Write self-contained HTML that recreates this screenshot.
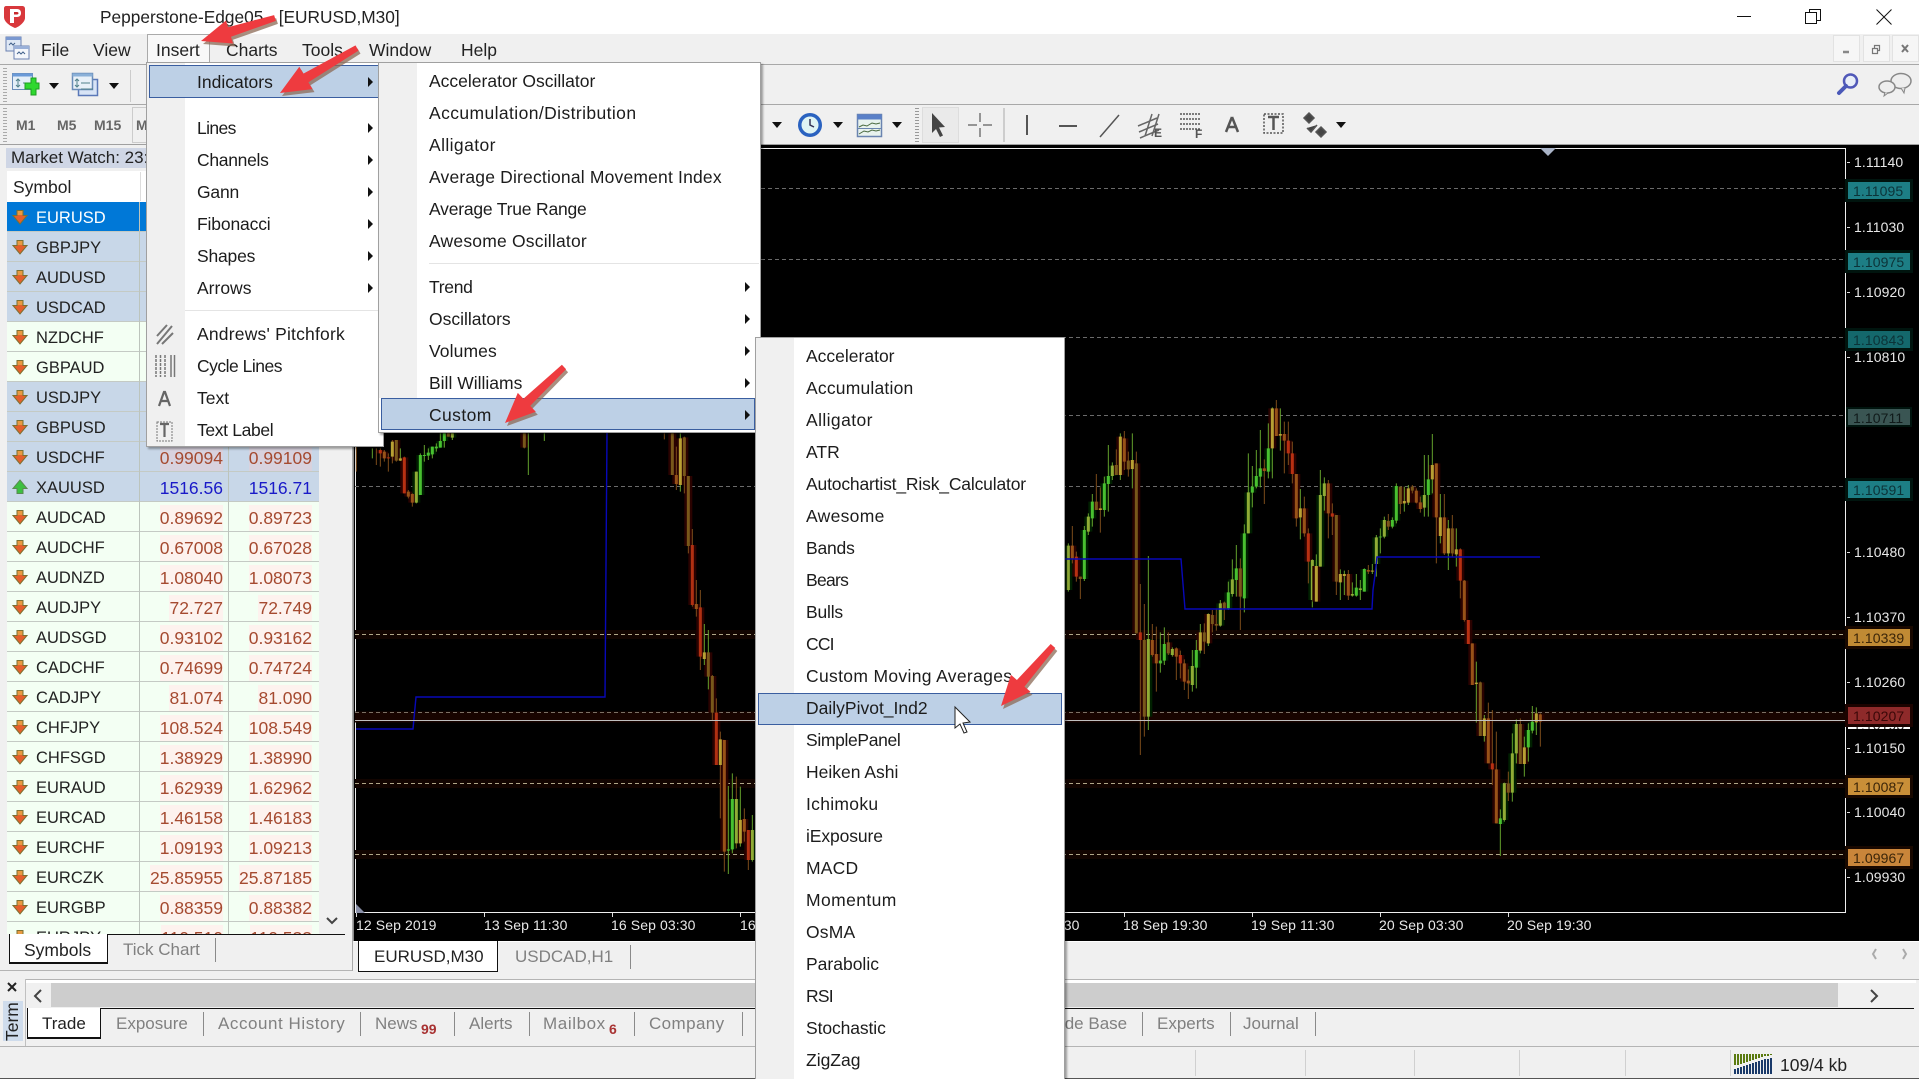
<!DOCTYPE html>
<html lang="en"><head><meta charset="utf-8"><title>Pepperstone-Edge05 - [EURUSD,M30]</title>
<style>
html,body{margin:0;padding:0;width:1919px;height:1079px;overflow:hidden;background:#f0f0f0;font-family:"Liberation Sans",sans-serif;color:#1a1a1a}
div,span,svg{position:absolute}
#root{left:0;top:0;width:1919px;height:1079px;overflow:hidden;background:#f0f0f0}
.t{white-space:nowrap}
.m{font-size:17.5px;top:38px;line-height:24px;white-space:nowrap;color:#222}
.tb{font-size:14px;font-weight:bold;color:#666;top:117px;line-height:16px}
.r{left:7px;width:312px;height:30px;box-sizing:border-box;border-bottom:1px solid #c4cac4;line-height:33px;font-size:16.5px;background:#f3fff3;color:#222}
.r.b{background:#c8d7e8}
.r::before,.r::after{content:"";position:absolute;top:0;width:1px;height:30px;background:#bcc4bc}
.r::before{left:132px}.r::after{left:221px}
.r svg{left:5px;top:7px;width:16px;height:16px}
.s{left:29px}
.a,.c{font-size:17.5px;color:#a54a30;top:3px;line-height:26px}
.a{right:96px;background:#fdf2ee}.c{right:7px;background:#fdf2ee}
.b .a,.b .c{background:#d8d2de}
.u .a,.u .c{color:#1a1ac8;background:none}
.ax{font-size:14px;color:#e8e8e8;left:1854px;line-height:16px;letter-spacing:.1px;white-space:nowrap}
.box{left:1848px;width:62px;height:17px;font-size:14px;line-height:18px;color:#0c3338;text-indent:5px;letter-spacing:.1px;overflow:hidden}
.tk{left:1847px;width:3px;height:1px;background:#ddd}
.tm{font-size:14px;color:#e8e8e8;top:917px;line-height:16px;white-space:nowrap;letter-spacing:.1px}
.tt{top:913px;width:1px;height:4px;background:#ddd}
.menu{background:#fff;border:1px solid #a0a0a0;box-shadow:2px 2px 2px rgba(0,0,0,.35);box-sizing:border-box}
.gut{background:#f0f0f0}
.mi{font-size:17.5px;line-height:32px;height:32px;white-space:nowrap;color:#1c1c1c}
.hl{background:#bdd0e6;border:1px solid #3a5ea0;box-sizing:border-box}
.ar{width:0;height:0;border-left:5px solid #111;border-top:5px solid transparent;border-bottom:5px solid transparent}
.dd{width:0;height:0;border:5px solid transparent;border-top:6px solid #111;border-bottom:0}
.sep{background:#e4e4e4;height:1px}
.tab{font-size:17px;color:#808080;top:1012px;line-height:24px;white-space:nowrap}
.vs{width:1px;background:#8a8a8a}
.st{top:1050px;height:26px;width:1px;background:#d0d0d0}
</style></head>
<body>
<div id="root">

<!-- title bar -->
<div style="left:0;top:0;width:1919px;height:34px;background:#fff"></div>
<svg style="left:2px;top:3px" width="26" height="26" viewBox="0 0 26 26"><path d="M4 3h16c2 0 3 1 3 3v9c0 4-6 9-10 10C8 23 2 19 2 14V5c0-1 1-2 2-2z" fill="#d8383c"/><path d="M8 6h7c3 0 4 2 4 4s-1 4-4 4h-3v6H8z" fill="#fff"/><path d="M12 9h3c1 0 1.500.5 1.500 1.300S16 11.500 15 11.500h-3z" fill="#c8282c"/></svg>
<div class="t" style="left:100px;top:5px;font-size:17.3px;line-height:24px;color:#222">Pepperstone-Edge05 - [EURUSD,M30]</div>
<svg style="left:1737px;top:9px" width="182" height="16" viewBox="0 0 182 16"><path d="M0 7.500h14" stroke="#111" stroke-width="1" fill="none"/><path d="M68.500 3.500h11v11h-11zM72.500 3.500V.5h11v11h-4" stroke="#111" fill="none"/><path d="M139.500.5l15 15M154.500.5l-15 15" stroke="#111" fill="none"/></svg>

<!-- menu bar -->
<div style="left:0;top:64px;width:1919px;height:1px;background:#a8a8a8"></div>
<svg style="left:5px;top:35px" width="26" height="26" viewBox="0 0 26 26"><rect x="1" y="2" width="15" height="14" fill="#dfe8f5" stroke="#6a80b0"/><rect x="1" y="2" width="15" height="3" fill="#7a98d0"/><rect x="9" y="11" width="15" height="13" fill="#f4f6fb" stroke="#6a80b0"/><rect x="9" y="11" width="15" height="3" fill="#9ab0d8"/><path d="M4 10l2-2 2 2 2-2M12 19l2-2 2 2 2-2 2 2" stroke="#40608a" fill="none"/></svg>
<div class="m" style="left:41px">File</div>
<div class="m" style="left:93px">View</div>
<div style="left:147px;top:34px;width:63px;height:30px;background:#f8f8f8;border:1px solid #aaa;border-bottom:0;box-sizing:border-box"></div>
<div class="m" style="left:156px">Insert</div>
<div class="m" style="left:226px">Charts</div>
<div class="m" style="left:302px">Tools</div>
<div class="m" style="left:369px">Window</div>
<div class="m" style="left:461px">Help</div>
<div style="left:1833px;top:35px;width:27px;height:27px;background:#f6f6f6;border:1px solid #e2e2e2;box-sizing:border-box"></div>
<div style="left:1863px;top:35px;width:27px;height:27px;background:#f6f6f6;border:1px solid #e2e2e2;box-sizing:border-box"></div>
<div style="left:1892px;top:35px;width:27px;height:27px;background:#f6f6f6;border:1px solid #e2e2e2;box-sizing:border-box"></div>
<svg style="left:1833px;top:35px" width="86" height="27" viewBox="0 0 86 27"><path d="M10 17h6" stroke="#888" stroke-width="2.500"/><path d="M39.500 13.500h5v5h-5zM41.500 13V10.500h5v5h-2" stroke="#777" fill="none" stroke-width="1.200"/><path d="M69 10l6 7M75 10l-6 7" stroke="#777" stroke-width="2"/></svg>

<!-- toolbar 1 -->
<div style="left:0;top:104px;width:1919px;height:1px;background:#a8a8a8"></div>
<div style="left:3px;top:68px;width:4px;height:34px;background:repeating-linear-gradient(#aaa 0 1px,#f0f0f0 1px 3px)"></div>
<svg style="left:11px;top:71px" width="30" height="26" viewBox="0 0 30 26"><rect x="1.500" y="2.500" width="20" height="16" fill="#e4eef8" stroke="#6a8cb8"/><rect x="1.500" y="2.500" width="20" height="3" fill="#6a9ad8"/><path d="M7 8v8M5 10l2-2 2 2M5 14l2 2 2-2M12 12h6" stroke="#50808a" fill="none"/><path d="M15 11h6V6h5v5h3v6h-3v6h-5v-6h-6z" transform="translate(-1,1)" fill="#2fd82f" stroke="#1e9e20"/></svg>
<div class="dd" style="left:49px;top:83px"></div>
<svg style="left:71px;top:71px" width="30" height="28" viewBox="0 0 30 28"><rect x="7.500" y="8.500" width="19" height="16" fill="#d8e4f6" stroke="#5a78b8" stroke-width="1.500"/><rect x="1.500" y="2.500" width="20" height="16" fill="#e8f0f8" stroke="#6a8cb8" stroke-width="1.500"/><rect x="1.500" y="2.500" width="20" height="3" fill="#8ab0d8"/><path d="M6 8v8M4 10l2-2 2 2M4 14l2 2 2-2M10 12h9M10 18h12" stroke="#50808a" fill="none"/></svg>
<div class="dd" style="left:109px;top:83px"></div>
<div class="vs" style="left:130px;top:70px;height:32px;background:#ccc"></div>

<!-- toolbar 2 -->
<div style="left:0;top:144px;width:1919px;height:1px;background:#a0a0a0"></div>
<div style="left:3px;top:108px;width:4px;height:34px;background:repeating-linear-gradient(#aaa 0 1px,#f0f0f0 1px 3px)"></div>
<div class="tb" style="left:16px">M1</div>
<div class="tb" style="left:57px">M5</div>
<div class="tb" style="left:94px">M15</div>
<div style="left:132px;top:107px;width:30px;height:36px;border:1px solid #ccc;box-sizing:border-box"></div>
<div class="tb" style="left:136px">M30</div>
<div class="dd" style="left:772px;top:122px"></div>
<svg style="left:797px;top:112px" width="26" height="26" viewBox="0 0 26 26"><circle cx="13" cy="13" r="12" fill="#2a62c0"/><circle cx="13" cy="13" r="8.500" fill="#dff4f4"/><path d="M13 7v6l4 2" stroke="#335" stroke-width="1.500" fill="none"/></svg>
<div class="dd" style="left:833px;top:122px"></div>
<svg style="left:856px;top:113px" width="28" height="26" viewBox="0 0 28 26"><rect x="1.500" y="1.500" width="24" height="22" fill="#e8f2ee" stroke="#6a84b0" stroke-width="1.500"/><rect x="1.500" y="1.500" width="24" height="5" fill="#5a80c8"/><path d="M3 14l4-2 4 1 5-3 4 1 4-1M3 21l5-3 4 1 4-2 4 1 4-1" stroke="#4a6a40" fill="none"/><path d="M2 15.500h23" stroke="#6a84b0"/></svg>
<div class="dd" style="left:892px;top:122px"></div>
<div style="left:915px;top:108px;width:4px;height:34px;background:repeating-linear-gradient(#999 0 1px,#f0f0f0 1px 3px)"></div>
<div style="left:922px;top:107px;width:37px;height:36px;border:1px solid #ddd;box-sizing:border-box;background:#eaeaea"></div>
<svg style="left:925px;top:108px" width="430" height="34" viewBox="0 0 430 34" fill="none" stroke="#555">
<path d="M7 5l13 14-6 .5 4 8-3 1.500-4-8-4 4z" fill="#444" stroke="none"/>
<path d="M55 5v9M55 20v9M43 17h9M58 17h9" stroke="#777" stroke-width="1.500"/>
<path d="M79 0v34" stroke="#aaa"/>
<path d="M102 7v20" stroke-width="2"/>
<path d="M134 18h18" stroke-width="2"/>
<path d="M175 29l19-22" stroke-width="1.500"/>
<path d="M213 18l19-8M214 24l19-8M215 30l19-8M220 28l7-22M227 28l7-22" stroke-width="1.500" stroke="#666"/>
<path d="M255 6h20M255 11h20M255 16h20M255 21h20" stroke-dasharray="2 1" stroke-width="1.500"/>
<path d="M307 9l-6 15M307 9l6 15M303 19h9" stroke-width="2.500"/>
<path d="M339 6h19v19h-19z" stroke-dasharray="2 1.500" stroke-width="1.500"/>
<path d="M343 9h11M348.500 9v13" stroke-width="2.500"/>
<path d="M384 5l5 5-5 5-5-5zM396 19l5 5-5 5-5-5zM382 20l4 4 6-7" fill="#444" stroke-width="1.500"/>
</svg>
<div class="t" style="left:1154px;top:127px;font-size:12px;color:#555;font-weight:bold;line-height:12px">E</div>
<div class="t" style="left:1195px;top:128px;font-size:12px;color:#555;font-weight:bold;line-height:12px">F</div>
<div class="dd" style="left:1336px;top:122px"></div>
<svg style="left:1836px;top:72px" width="24" height="26" viewBox="0 0 24 26"><circle cx="14.500" cy="9" r="6.500" fill="#e8eef8" stroke="#5058b8" stroke-width="2.500"/><path d="M10 14l-7 7" stroke="#4a58b8" stroke-width="4" stroke-linecap="round"/></svg>
<svg style="left:1877px;top:72px" width="36" height="26" viewBox="0 0 36 26"><ellipse cx="24" cy="9" rx="10" ry="7.500" fill="#eee" stroke="#888" stroke-width="1.500"/><path d="M24 16l3 5 1-5" fill="#ddd" stroke="#888"/><ellipse cx="10" cy="15" rx="8" ry="6" fill="#eee" stroke="#888" stroke-width="1.500"/><path d="M8 20l-1 4 4-3" fill="#ddd" stroke="#888"/></svg>

<!-- chart -->
<div style="left:353px;top:145px;width:1566px;height:796px;background:#000;border-left:1px solid #8a8a8a"></div>
<div style="left:355px;top:148px;width:1491px;height:765px;border:1px solid #eee;box-sizing:border-box"></div>
<svg style="left:0;top:0" width="1919" height="1079" viewBox="0 0 1919 1079">
<defs>
<path id="a1" d="M61 390V537M85 305V355M121 250V330M133 228V252M289 782V790M301 732V782M397 750V803M493 577V625M517 505V540M541 400V595M565 260V278M577 228V260M589 205V230M613 145V215"/>
<path id="a2" d="M13 437V570M73 350V395M145 197V228M253 717V950M385 798V855M469 610V677M505 538V582M553 277V400M745 480V600M325 747V765"/>
<path id="a3" d="M109 325V330M169 110V225M205 180V207M409 697V752M433 642V730M625 25V145M649 102V107M709 325V352"/>
<path id="a4" d="M49 530V537M97 305V330M157 195V225M193 182V208M217 190V700M241 720V950M313 727V760M421 697V725M445 645V672M457 672V677M481 608V628M529 505V590"/>
<path id="a5" d="M25 437V475M181 115V185M265 720V765M277 762V790M337 745V770M361 790V845M373 842V850M601 205V213M637 25V108M661 102V122M697 222V355M721 325V400"/>
<path id="a6" d="M37 470V530M229 697V720M349 765V790M673 122V160M685 160V222M733 400V485"/>
<path id="b1" d="M193 447V515M169 503V527M277 300V320M289 198V302M241 350V352M385 178V225M601 1195V1212M685 930V982M697 905V932"/>
<path id="b2" d="M61 225V440M73 190V228M229 352V432M253 300V350M157 522V527M181 505V510M373 225V263M613 1090V1200M637 1000V1118M649 912V1000"/>
<path id="b3" d="M49 438V545M121 462V487M133 462V468M217 452V455M313 243V250M325 205V248M397 135V178M421 292V348M445 325V400M469 388V403M529 788V792M553 895V948M673 982V1032M709 880V907"/>
<path id="b4" d="M109 285V485M265 303V320M301 200V252M337 200V212M457 325V400M541 787V948M625 1090V1118M661 912V1032"/>
<path id="b5" d="M85 190V280M145 462V527M205 450V455M349 212V248M361 247V267M409 130V292M433 292V400M493 482V600M517 670V795M565 895V1030M589 1048V1210M721 883V905"/>
<path id="b6" d="M97 280V290M481 388V482M505 600V672M577 1030V1048"/>
<path id="c1" d="M217 1107V1258M205 1258V1262"/>
<path id="c2" d="M277 1200V1290M229 1107V1240"/>
<path id="c3" d="M61 25V165M133 667V687M181 928V1005M241 1170V1240"/>
<path id="c4" d="M37 10V135M73 22V138M85 138V348M157 738V848M145 667V740"/>
<path id="c5" d="M49 135V162M109 522V537M193 930V1265M253 1167V1205"/>
<path id="c6" d="M97 345V525M121 532V680M169 848V1005M265 1200V1290"/>
<path id="d1" d="M211 90V210M223 90V93M235 83V92M247 65V88M259 65V70M271 48V68M283 25V48"/>
<path id="d2" d="M199 140V233M307 25V38"/>
<path id="d3" d="M127 50V95M151 100V107"/>
<path id="d4" d="M139 45V107M295 25V35M523 25V68"/>
<path id="d5" d="M103 80V100M175 200V215M187 207V233"/>
<path id="d6" d="M91 75V85M115 97V100M163 97V205"/>
</defs>
<g fill="none">
<path d="M355 634.500H1846M355 783.500H1846M355 854.500H1846" stroke-width="9" stroke="#120400"/>
<path d="M355 717H1846" stroke-width="11" stroke="#180400"/>
</g>
<g fill="none" stroke-dasharray="4 3">
<path d="M355 188.500H1846M355 259.500H1846M355 337.500H1846M355 415.500H1846M355 486.500H1846" stroke="#6a6a6a"/>
<path d="M355 634.500H1846M355 783.500H1846M355 854.500H1846" stroke="#b0a688"/>
<path d="M355 712.500H1846" stroke="#7c7064"/>
</g>
<g fill="none" transform="translate(1064,400) scale(.33333)">
<g stroke-width="24" stroke="#002000"><use href="#a1"/><use href="#a2"/></g>
<g stroke-width="24" stroke="#2a0200"><use href="#a3"/><use href="#a4"/><use href="#a5"/><use href="#a6"/></g>
<path stroke="#62a02c" stroke-width="3" d="M13 430V575M61 378V543M73 340V405M85 282V380M121 230V350M133 135V335M145 187V240M169 100V240M205 100V265M253 468V990M289 697V818M301 682V795M325 742V770M385 750V875M397 720V865M409 672V760M433 640V738M469 600V680M493 545V630M505 478V590M517 435V590M541 373V637M553 160V400M565 198V322M577 150V265M589 90V262M613 70V235M625 22V235M649 25V152M709 267V418M745 478V622"/>
<path stroke="#7c4c1a" stroke-width="3" d="M25 378V490M37 455V545M49 530V597M97 222V330M109 262V398M157 148V225M181 93V210M193 155V230M217 155V700M229 552V1065M241 612V1010M265 672V770M277 680V875M313 697V765M337 742V840M349 752V835M361 778V870M373 808V897M421 670V762M445 630V697M457 625V692M481 605V660M529 475V690M601 178V312M637 0V108M661 65V220M673 65V195M685 125V250M697 222V380M721 290V410M733 385V550"/>
<g stroke-width="9"><use href="#a1" stroke="#48c030"/><use href="#a2" stroke="#90ac36"/><use href="#a3" stroke="#b8a034"/><use href="#a4" stroke="#78581a"/><use href="#a5" stroke="#985218"/><use href="#a6" stroke="#b83012"/></g>
</g>
<g fill="none" transform="translate(1300,420) scale(.33333)">
<g stroke-width="24" stroke="#002000"><use href="#b1"/><use href="#b2"/></g>
<g stroke-width="24" stroke="#2a0200"><use href="#b3"/><use href="#b4"/><use href="#b5"/><use href="#b6"/></g>
<path stroke="#62a02c" stroke-width="3" d="M49 403V545M61 150V440M73 172V272M121 448V540M133 452V525M157 487V530M169 462V530M181 480V540M193 445V515M217 432V462M229 345V470M241 325V400M253 290V355M277 292V325M289 190V310M313 200V275M325 195V255M373 105V290M385 105V290M397 42V220M421 222V370M445 300V450M469 325V440M529 725V908M553 885V965M601 1168V1308M613 1088V1205M637 940V1145M649 898V1030M673 950V1070M685 910V1025M697 858V940M709 862V945"/>
<path stroke="#7c4c1a" stroke-width="3" d="M85 180V355M97 250V345M109 285V525M145 450V540M205 435V462M265 282V330M301 200V282M337 195V220M349 205V250M361 230V278M409 130V430M433 222V405M457 285V410M481 385V535M493 480V605M505 600V672M517 670V795M541 785V948M565 848V1020M577 870V1095M589 935V1210M625 1055V1143M661 895V1032M721 880V980"/>
<g stroke-width="9"><use href="#b1" stroke="#48c030"/><use href="#b2" stroke="#90ac36"/><use href="#b3" stroke="#b8a034"/><use href="#b4" stroke="#78581a"/><use href="#b5" stroke="#985218"/><use href="#b6" stroke="#b83012"/></g>
</g>
<g fill="none" transform="translate(660,430) scale(.33333)">
<g stroke-width="24" stroke="#002000"><use href="#c1"/><use href="#c2"/></g>
<g stroke-width="24" stroke="#2a0200"><use href="#c3"/><use href="#c4"/><use href="#c5"/><use href="#c6"/></g>
<path stroke="#62a02c" stroke-width="3" d="M61 10V185M133 582V705M205 1068V1332M217 1030V1270M241 1070V1250M277 1155V1295M145 600V778"/>
<path stroke="#7c4c1a" stroke-width="3" d="M13 10V28M37 10V135M49 50V180M73 20V190M85 138V370M97 297V530M109 450V560M121 480V720M157 735V870M169 805V1005M181 905V1165M193 930V1325M229 1040V1255M253 1135V1235M265 1200V1320"/>
<g stroke-width="9"><use href="#c1" stroke="#48c030"/><use href="#c2" stroke="#90ac36"/><use href="#c3" stroke="#b8a034"/><use href="#c4" stroke="#78581a"/><use href="#c5" stroke="#985218"/><use href="#c6" stroke="#b03012"/></g>
</g>
<g fill="none" transform="translate(350,425) scale(.33333)">
<g stroke-width="24" stroke="#002000"><use href="#d1"/><use href="#d2"/></g>
<g stroke-width="24" stroke="#2a0200"><use href="#d4"/><use href="#d5"/><use href="#d6"/></g>
<path stroke="#62a02c" stroke-width="3" d="M67 70V100M199 140V235M211 85V205M223 60V110M235 70V105M247 65V100M259 55V80M271 25V68M283 25V68M307 25V45M535 25V150M583 25V48M151 70V108"/>
<path stroke="#7c4c1a" stroke-width="3" d="M19 65V140M79 70V120M91 70V125M103 75V110M115 85V140M127 45V115M139 45V110M163 95V205M175 195V220M187 205V245M295 25V35M523 25V70"/>
<g stroke-width="9"><use href="#d1" stroke="#48c030"/><use href="#d2" stroke="#90ac36"/><use href="#d3" stroke="#b8a034"/><use href="#d4" stroke="#78581a"/><use href="#d5" stroke="#985218"/><use href="#d6" stroke="#b83012"/></g>
</g>
<path fill="none" stroke="#0808b8" stroke-width="1.400" d="M356 729H413L416 697H605L606 564L607 433"/>
<path fill="none" stroke="#0808b8" stroke-width="1.400" d="M1064 559H1181L1185 609H1372L1373 590L1375 575L1377 557H1540"/>
<path d="M355 720.500H1846" stroke="#c0c0c0" stroke-width="1"/>
<path d="M1540 148h16l-8 8z" fill="#aab4c8"/>
<path d="M356 913v-9l9 9z" fill="#8a90a8"/>
</svg>

<!-- axis -->
<div class="ax" style="top:154px">1.11140</div><div class="tk" style="top:162px"></div>
<div class="box" style="top:182px;background:#1d7e85;box-shadow:0 0 0 3px #00140e">1.11095</div>
<div class="ax" style="top:219px">1.11030</div><div class="tk" style="top:227px"></div>
<div class="box" style="top:253px;background:#1d7e85;box-shadow:0 0 0 3px #00140e">1.10975</div>
<div class="ax" style="top:284px">1.10920</div><div class="tk" style="top:292px"></div>
<div class="ax" style="top:349px">1.10810</div><div class="tk" style="top:357px"></div>
<div class="box" style="top:331px;background:#14686c;box-shadow:0 0 0 3px #00140e">1.10843</div>
<div class="ax" style="top:414px">1.10700</div>
<div class="box" style="top:409px;background:#3a5553;box-shadow:0 0 0 2px #00140e;height:16px;color:#101a1a">1.10711</div>
<div class="box" style="top:481px;background:#1d7e85;box-shadow:0 0 0 3px #00140e">1.10591</div>
<div class="ax" style="top:544px">1.10480</div><div class="tk" style="top:552px"></div>
<div class="ax" style="top:609px">1.10370</div><div class="tk" style="top:617px"></div>
<div class="box" style="top:629px;background:#c08a34;box-shadow:0 0 0 3px #180800;color:#3a2408">1.10339</div>
<div class="ax" style="top:674px">1.10260</div><div class="tk" style="top:682px"></div>
<div class="box" style="top:716px;height:13px;background:#fff;color:#222">1.10193</div>
<div class="box" style="top:707px;background:#8e2a2a;box-shadow:0 0 0 3px #1c0300;color:#3a0808">1.10207</div>
<div class="ax" style="top:740px">1.10150</div><div class="tk" style="top:748px"></div>
<div class="box" style="top:778px;background:#c98f38;box-shadow:0 0 0 3px #180800;color:#3a2408">1.10087</div>
<div class="ax" style="top:804px">1.10040</div><div class="tk" style="top:812px"></div>
<div class="box" style="top:849px;background:#c9853a;box-shadow:0 0 0 3px #180800;color:#3a2408">1.09967</div>
<div class="ax" style="top:869px">1.09930</div><div class="tk" style="top:877px"></div>

<!-- time axis -->
<div class="tt" style="left:356px"></div><div class="tt" style="left:484px"></div><div class="tt" style="left:612px"></div><div class="tt" style="left:740px"></div><div class="tt" style="left:1124px"></div><div class="tt" style="left:1252px"></div><div class="tt" style="left:1380px"></div><div class="tt" style="left:1508px"></div>
<div class="tm" style="left:356px">12 Sep 2019</div>
<div class="tm" style="left:484px">13 Sep 11:30</div>
<div class="tm" style="left:611px">16 Sep 03:30</div>
<div class="tm" style="left:740px">16 Sep 19:30</div>
<div class="tm" style="left:995px">18 Sep 03:30</div>
<div class="tm" style="left:1123px">18 Sep 19:30</div>
<div class="tm" style="left:1251px">19 Sep 11:30</div>
<div class="tm" style="left:1379px">20 Sep 03:30</div>
<div class="tm" style="left:1507px">20 Sep 19:30</div>

<!-- chart tabs -->
<div style="left:354px;top:941px;width:1565px;height:1px;background:#fff"></div>
<div style="left:358px;top:941px;width:140px;height:31px;background:#fff;border:1px solid #111;border-top:0;box-sizing:border-box"></div>
<div class="t" style="left:374px;top:945px;font-size:17px;line-height:24px;color:#222">EURUSD,M30</div>
<div class="t" style="left:515px;top:945px;font-size:17px;line-height:24px;color:#808080">USDCAD,H1</div>
<div class="vs" style="left:630px;top:945px;height:24px"></div>
<svg style="left:1870px;top:947px" width="40" height="14" viewBox="0 0 40 14"><path d="M6 2L3 7l3 5M33 2l3 5-3 5" stroke="#aaa" stroke-width="2" fill="none"/></svg>

<!-- market watch -->
<div style="left:6px;top:148px;width:142px;height:20px;background:#cfd6e5"></div>
<div class="t" style="left:11px;top:146px;font-size:17px;line-height:24px;color:#222">Market Watch: 23:</div>
<div style="left:7px;top:171px;width:312px;height:31px;background:#fff"></div>
<div class="t" style="left:13px;top:175px;font-size:17.5px;line-height:24px;color:#222">Symbol</div>
<div style="left:140px;top:172px;width:1px;height:29px;background:#ddd"></div>
<svg width="0" height="0" style="left:0;top:0"><defs>
<symbol id="dn" viewBox="0 0 16 16"><path d="M5 1.500h6v5h4L8 15 1 6.500h4z" fill="#e4602c" stroke="#7c7030" stroke-width="1"/><path d="M5.500 2h5v4h-5z" fill="#e89a40"/></symbol>
<symbol id="up" viewBox="0 0 16 16"><path d="M5 14.500h6v-5h4L8 1 1 9.500h4z" fill="#3cc040" stroke="#5a8a50" stroke-width="1"/></symbol>
</defs></svg>
<div style="left:0;top:0;width:352px;height:934px;overflow:hidden">
<div class="r" style="top:202px;background:#0078d7;color:#fff;width:139px"><svg><use href="#dn"/></svg><span class="s">EURUSD</span></div>
<div class="r b" style="top:232px"><svg><use href="#dn"/></svg><span class="s">GBPJPY</span></div>
<div class="r b" style="top:262px"><svg><use href="#dn"/></svg><span class="s">AUDUSD</span></div>
<div class="r b" style="top:292px"><svg><use href="#dn"/></svg><span class="s">USDCAD</span></div>
<div class="r" style="top:322px"><svg><use href="#dn"/></svg><span class="s">NZDCHF</span></div>
<div class="r" style="top:352px"><svg><use href="#dn"/></svg><span class="s">GBPAUD</span></div>
<div class="r b" style="top:382px"><svg><use href="#dn"/></svg><span class="s">USDJPY</span></div>
<div class="r b" style="top:412px"><svg><use href="#dn"/></svg><span class="s">GBPUSD</span></div>
<div class="r b" style="top:442px"><svg><use href="#dn"/></svg><span class="s">USDCHF</span><span class="a">0.99094</span><span class="c">0.99109</span></div>
<div class="r b u" style="top:472px"><svg><use href="#up"/></svg><span class="s">XAUUSD</span><span class="a">1516.56</span><span class="c">1516.71</span></div>
<div class="r" style="top:502px"><svg><use href="#dn"/></svg><span class="s">AUDCAD</span><span class="a">0.89692</span><span class="c">0.89723</span></div>
<div class="r" style="top:532px"><svg><use href="#dn"/></svg><span class="s">AUDCHF</span><span class="a">0.67008</span><span class="c">0.67028</span></div>
<div class="r" style="top:562px"><svg><use href="#dn"/></svg><span class="s">AUDNZD</span><span class="a">1.08040</span><span class="c">1.08073</span></div>
<div class="r" style="top:592px"><svg><use href="#dn"/></svg><span class="s">AUDJPY</span><span class="a">72.727</span><span class="c">72.749</span></div>
<div class="r" style="top:622px"><svg><use href="#dn"/></svg><span class="s">AUDSGD</span><span class="a">0.93102</span><span class="c">0.93162</span></div>
<div class="r" style="top:652px"><svg><use href="#dn"/></svg><span class="s">CADCHF</span><span class="a">0.74699</span><span class="c">0.74724</span></div>
<div class="r" style="top:682px"><svg><use href="#dn"/></svg><span class="s">CADJPY</span><span class="a">81.074</span><span class="c">81.090</span></div>
<div class="r" style="top:712px"><svg><use href="#dn"/></svg><span class="s">CHFJPY</span><span class="a">108.524</span><span class="c">108.549</span></div>
<div class="r" style="top:742px"><svg><use href="#dn"/></svg><span class="s">CHFSGD</span><span class="a">1.38929</span><span class="c">1.38990</span></div>
<div class="r" style="top:772px"><svg><use href="#dn"/></svg><span class="s">EURAUD</span><span class="a">1.62939</span><span class="c">1.62962</span></div>
<div class="r" style="top:802px"><svg><use href="#dn"/></svg><span class="s">EURCAD</span><span class="a">1.46158</span><span class="c">1.46183</span></div>
<div class="r" style="top:832px"><svg><use href="#dn"/></svg><span class="s">EURCHF</span><span class="a">1.09193</span><span class="c">1.09213</span></div>
<div class="r" style="top:862px"><svg><use href="#dn"/></svg><span class="s">EURCZK</span><span class="a">25.85955</span><span class="c">25.87185</span></div>
<div class="r" style="top:892px"><svg><use href="#dn"/></svg><span class="s">EURGBP</span><span class="a">0.88359</span><span class="c">0.88382</span></div>
<div class="r" style="top:922px"><svg><use href="#dn"/></svg><span class="s">EURJPY</span><span class="a">110.510</span><span class="c">110.533</span></div>
</div>
<svg style="left:325px;top:915px" width="14" height="12" viewBox="0 0 14 12"><path d="M2 3l5 5 5-5" stroke="#444" stroke-width="2" fill="none"/></svg>
<div style="left:9px;top:934px;width:336px;height:1px;background:#111"></div>
<div style="left:9px;top:934px;width:99px;height:30px;background:#fff;border:1px solid #111;border-top:0;border-bottom-width:2px;box-sizing:border-box"></div>
<div class="t" style="left:24px;top:938px;font-size:17.5px;line-height:24px;color:#222">Symbols</div>
<div class="t" style="left:123px;top:938px;font-size:17px;line-height:24px;color:#808080">Tick Chart</div>
<div class="vs" style="left:215px;top:938px;height:24px"></div>
<div style="left:0;top:970px;width:353px;height:1px;background:#b4b4b4"></div>
<div style="left:352px;top:145px;width:1px;height:826px;background:#a8a8a8"></div>

<!-- terminal -->
<div style="left:25px;top:979px;width:1894px;height:1px;background:#b4b4b4"></div>
<div style="left:25px;top:979px;width:1px;height:67px;background:#c0c0c0"></div>
<div style="left:26px;top:980px;width:1890px;height:3px;background:#fff"></div>
<svg style="left:6px;top:981px" width="12" height="12" viewBox="0 0 12 12"><path d="M2 2l8 8M10 2l-8 8" stroke="#222" stroke-width="2"/></svg>
<div style="left:3px;top:1001px;width:20px;height:40px;background:#cfdcec;overflow:hidden"><div class="t" style="left:-11px;top:8px;width:40px;height:24px;font-size:17.5px;line-height:24px;transform:rotate(-90deg);color:#222;text-align:left">Term</div></div>
<div style="left:51px;top:983px;width:1787px;height:24px;background:#cdcdcd"></div>
<svg style="left:32px;top:988px" width="12" height="16" viewBox="0 0 12 16"><path d="M9 2L3 8l6 6" stroke="#444" stroke-width="2" fill="none"/></svg>
<svg style="left:1868px;top:988px" width="12" height="16" viewBox="0 0 12 16"><path d="M3 2l6 6-6 6" stroke="#444" stroke-width="2" fill="none"/></svg>
<div style="left:27px;top:1008px;width:1887px;height:1px;background:#111"></div>
<div style="left:27px;top:1008px;width:74px;height:31px;background:#fff;border:1px solid #111;border-top:0;border-bottom-width:2px;box-sizing:border-box"></div>
<div class="tab" style="left:42px;color:#222">Trade</div>
<div class="tab" style="left:116px">Exposure</div><div class="vs" style="left:203px;top:1012px;height:24px"></div>
<div class="tab" style="left:218px;letter-spacing:.55px">Account History</div><div class="vs" style="left:360px;top:1012px;height:24px"></div>
<div class="tab" style="left:375px">News</div><div class="t" style="left:421px;top:1021px;font-size:14px;line-height:16px;font-weight:bold;color:#a83232">99</div><div class="vs" style="left:454px;top:1012px;height:24px"></div>
<div class="tab" style="left:469px">Alerts</div><div class="vs" style="left:529px;top:1012px;height:24px"></div>
<div class="tab" style="left:543px;letter-spacing:.6px">Mailbox</div><div class="t" style="left:609px;top:1021px;font-size:14px;line-height:16px;font-weight:bold;color:#a83232">6</div><div class="vs" style="left:634px;top:1012px;height:24px"></div>
<div class="tab" style="left:649px;letter-spacing:.4px">Company</div><div class="vs" style="left:742px;top:1012px;height:24px"></div>
<div class="tab" style="left:1043px">Code Base</div><div class="vs" style="left:1142px;top:1012px;height:24px"></div>
<div class="tab" style="left:1157px">Experts</div><div class="vs" style="left:1230px;top:1012px;height:24px"></div>
<div class="tab" style="left:1243px">Journal</div><div class="vs" style="left:1315px;top:1012px;height:24px"></div>

<!-- status -->
<div style="left:0;top:1046px;width:1919px;height:1px;background:#b4b4b4"></div>
<div style="left:0;top:1078px;width:1919px;height:1px;background:#555"></div>
<div class="st" style="left:1195px"></div><div class="st" style="left:1305px"></div><div class="st" style="left:1414px"></div><div class="st" style="left:1519px"></div><div class="st" style="left:1625px"></div><div class="st" style="left:1730px"></div>
<svg style="left:1734px;top:1054px" width="38" height="20" viewBox="0 0 38 20"><path d="M1 0V11M4 0V11M7 0V10M10 0V9M13 0V8M16 0V7M19 0V6M22 0V5M25 0V4M28 0V3M31 0V2M34 0V2M37 0V1" stroke="#5a7a10" stroke-width="2"/><path d="M1 15V20M4 14V20M7 13V20M10 12V20M13 11V20M16 10V20M19 9V20M22 8V20M25 7V20M28 6V20M31 5V20M34 5V20M37 4V20" stroke="#1a3a6a" stroke-width="2"/></svg>
<div class="t" style="left:1780px;top:1053px;font-size:17.5px;line-height:24px;color:#222">109/4 kb</div>

<!-- insert menu -->
<div class="menu" style="left:146px;top:62px;width:238px;height:385px"></div>
<div class="gut" style="left:147px;top:63px;width:38px;height:383px"></div>
<div class="hl" style="left:149px;top:65px;width:230px;height:33px"></div>
<div class="mi" style="left:197px;top:66px">Indicators</div><div class="ar" style="left:368px;top:77px"></div>
<div class="mi" style="left:197px;top:112px;letter-spacing:-.6px">Lines</div><div class="ar" style="left:368px;top:123px"></div>
<div class="mi" style="left:197px;top:144px;letter-spacing:-.3px">Channels</div><div class="ar" style="left:368px;top:155px"></div>
<div class="mi" style="left:197px;top:176px;letter-spacing:-.2px">Gann</div><div class="ar" style="left:368px;top:187px"></div>
<div class="mi" style="left:197px;top:208px;letter-spacing:-.15px">Fibonacci</div><div class="ar" style="left:368px;top:219px"></div>
<div class="mi" style="left:197px;top:240px;letter-spacing:-.2px">Shapes</div><div class="ar" style="left:368px;top:251px"></div>
<div class="mi" style="left:197px;top:272px">Arrows</div><div class="ar" style="left:368px;top:283px"></div>
<div class="sep" style="left:185px;top:310px;width:198px"></div>
<div class="mi" style="left:197px;top:318px;letter-spacing:.2px">Andrews' Pitchfork</div>
<div class="mi" style="left:197px;top:350px;letter-spacing:-.5px">Cycle Lines</div>
<div class="mi" style="left:197px;top:382px">Text</div>
<div class="mi" style="left:197px;top:414px;letter-spacing:-.35px">Text Label</div>
<svg style="left:153px;top:323px" width="24" height="120" viewBox="0 0 24 120" fill="none" stroke="#777">
<path d="M4 13L14 2M4 21L19 3M9 21L20 10" stroke-width="2"/>
<path d="M3 32v22M7.500 32v22M12 32v22" stroke-width="1.500" stroke-dasharray="3 1"/><path d="M18 32v22M21.500 32v22" stroke-width="1.500"/>
<path d="M6 83l5-14h1l5 14M8 78h7" stroke-width="2.200" stroke="#666"/>
<path d="M4 99h15v19H4z" stroke-dasharray="2 1"/>
<path d="M7 101h9M11.500 101v13" stroke-width="2.200" stroke="#666"/>
</svg>

<!-- indicators submenu -->
<div class="menu" style="left:378px;top:62px;width:383px;height:371px"></div>
<div class="gut" style="left:379px;top:63px;width:38px;height:335px"></div>
<div class="mi" style="left:429px;top:65px">Accelerator Oscillator</div>
<div class="mi" style="left:429px;top:97px;letter-spacing:.4px">Accumulation/Distribution</div>
<div class="mi" style="left:429px;top:129px;letter-spacing:.4px">Alligator</div>
<div class="mi" style="left:429px;top:161px;letter-spacing:.18px">Average Directional Movement Index</div>
<div class="mi" style="left:429px;top:193px;letter-spacing:-.2px">Average True Range</div>
<div class="mi" style="left:429px;top:225px;letter-spacing:.2px">Awesome Oscillator</div>
<div class="sep" style="left:429px;top:263px;width:330px"></div>
<div class="mi" style="left:429px;top:271px;letter-spacing:-.3px">Trend</div><div class="ar" style="left:745px;top:282px"></div>
<div class="mi" style="left:429px;top:303px">Oscillators</div><div class="ar" style="left:745px;top:314px"></div>
<div class="mi" style="left:429px;top:335px;letter-spacing:.1px">Volumes</div><div class="ar" style="left:745px;top:346px"></div>
<div class="mi" style="left:429px;top:367px">Bill Williams</div><div class="ar" style="left:745px;top:378px"></div>
<div class="hl" style="left:381px;top:398px;width:374px;height:32px"></div>
<div class="mi" style="left:429px;top:399px;letter-spacing:.4px">Custom</div><div class="ar" style="left:745px;top:410px"></div>

<!-- custom submenu -->
<div class="menu" style="left:755px;top:337px;width:310px;height:750px"></div>
<div class="gut" style="left:756px;top:338px;width:38px;height:741px"></div>
<div class="hl" style="left:758px;top:693px;width:304px;height:32px"></div>
<div class="mi" style="left:806px;top:340px">Accelerator</div>
<div class="mi" style="left:806px;top:372px;letter-spacing:.2px">Accumulation</div>
<div class="mi" style="left:806px;top:404px;letter-spacing:.4px">Alligator</div>
<div class="mi" style="left:806px;top:436px">ATR</div>
<div class="mi" style="left:806px;top:468px;letter-spacing:-.17px">Autochartist_Risk_Calculator</div>
<div class="mi" style="left:806px;top:500px;letter-spacing:.3px">Awesome</div>
<div class="mi" style="left:806px;top:532px;letter-spacing:-.2px">Bands</div>
<div class="mi" style="left:806px;top:564px;letter-spacing:-.7px">Bears</div>
<div class="mi" style="left:806px;top:596px;letter-spacing:-.2px">Bulls</div>
<div class="mi" style="left:806px;top:628px;letter-spacing:-.8px">CCI</div>
<div class="mi" style="left:806px;top:660px;letter-spacing:.33px">Custom Moving Averages</div>
<div class="mi" style="left:806px;top:692px">DailyPivot_Ind2</div>
<div class="mi" style="left:806px;top:724px;letter-spacing:-.35px">SimplePanel</div>
<div class="mi" style="left:806px;top:756px">Heiken Ashi</div>
<div class="mi" style="left:806px;top:788px;letter-spacing:.3px">Ichimoku</div>
<div class="mi" style="left:806px;top:820px;letter-spacing:-.1px">iExposure</div>
<div class="mi" style="left:806px;top:852px;letter-spacing:.2px">MACD</div>
<div class="mi" style="left:806px;top:884px;letter-spacing:.4px">Momentum</div>
<div class="mi" style="left:806px;top:916px;letter-spacing:.2px">OsMA</div>
<div class="mi" style="left:806px;top:948px">Parabolic</div>
<div class="mi" style="left:806px;top:980px;letter-spacing:-.8px">RSI</div>
<div class="mi" style="left:806px;top:1012px;letter-spacing:-.1px">Stochastic</div>
<div class="mi" style="left:806px;top:1044px">ZigZag</div>

<!-- cursor + red arrows -->
<svg style="left:0;top:0" width="1919" height="1079" viewBox="0 0 1919 1079">
<path d="M955 707v21l5-4 4 9 3-1-4-9 7-1z" fill="#fff" stroke="#222" stroke-width="1"/>
<g fill="#8c6a55" opacity=".75" transform="translate(2,3)">
<polygon points="201,41 233,43.500 231,36.800 275.900,20.900 274.100,15.100 228,27.200 226,20.500"/>
<polygon points="280,93 312.500,89.100 308.400,82.200 358.500,50.600 355.500,45.400 303.400,73.600 299.300,66.700"/>
<polygon points="505,423 535.800,411.700 530.200,405.900 566.100,369.200 561.900,364.800 523.400,398.700 517.800,392.900"/>
<polygon points="1001,706 1030.500,691.800 1024.500,686.600 1055.300,648 1050.700,644 1016.900,680 1010.900,674.800"/>
</g>
<g fill="#ee3b3f">
<polygon points="201,41 233,43.500 231,36.800 275.900,20.900 274.100,15.100 228,27.200 226,20.500"/>
<polygon points="280,93 312.500,89.100 308.400,82.200 358.500,50.600 355.500,45.400 303.400,73.600 299.300,66.700"/>
<polygon points="505,423 535.800,411.700 530.200,405.900 566.100,369.200 561.900,364.800 523.400,398.700 517.800,392.900"/>
<polygon points="1001,706 1030.500,691.800 1024.500,686.600 1055.300,648 1050.700,644 1016.900,680 1010.900,674.800"/>
</g>
</svg>
</div>
</body></html>
